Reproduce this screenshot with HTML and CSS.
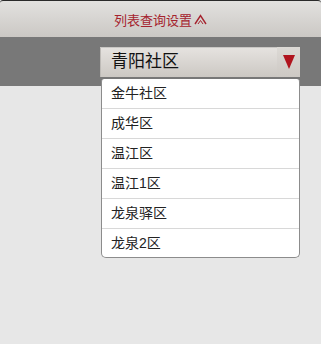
FILE: index.html
```html
<!DOCTYPE html>
<html lang="zh">
<head>
    <meta charset="UTF-8">
    <meta name="viewport" content="width=device-width, initial-scale=1.0">
    <title>列表查询设置</title>
    <link rel="stylesheet" href="styles.css">
</head>
<body>
    <div class="header">
        <span class="title">列表查询设置</span>
        <svg class="caret" width="13" height="11" viewBox="0 0 13 11">
            <path d="M1 10 L6.5 1.5 L12 10" fill="none" stroke="#a5232e" stroke-width="1.4"/>
            <path d="M4 10 L6.5 6.5 L9 10" fill="none" stroke="#a5232e" stroke-width="1"/>
        </svg>
    </div>

    <div class="toolbar">
        <div class="select">
            <span class="select-text">青阳社区</span>
            <span class="select-arrow">
                <svg width="12" height="14" viewBox="0 0 12 14">
                    <path d="M0 0 L12 0 L6 14 Z" fill="#b0141e"/>
                </svg>
            </span>
            <ul class="dropdown">
                <li>金牛社区</li>
                <li>成华区</li>
                <li>温江区</li>
                <li>温江1区</li>
                <li>龙泉驿区</li>
                <li>龙泉2区</li>
            </ul>
        </div>
    </div>
</body>
</html>
```

FILE: styles.css
```css
html, body {
    height: 100%;
}
body {
    margin: 0;
    background: #e7e7e7;
    font-family: "Liberation Sans", "Noto Sans CJK SC", sans-serif;
}
.header {
    height: 37px;
    box-sizing: border-box;
    border-top: 1px solid #2a2a2a;
    border-radius: 3px 3px 0 0;
    background: linear-gradient(#e2e1df, #cbc8c4);
    display: flex;
    align-items: center;
    justify-content: center;
    gap: 2px;
}
.title {
    color: #a5232e;
    font-size: 13px;
}
.caret {
    margin-top: 1px;
}
.toolbar {
    height: 49px;
    background: #787878;
    padding: 10px 0 0 100px;
    box-sizing: border-box;
}
.select {
    position: relative;
    width: 200px;
    height: 30px;
    display: flex;
    background: linear-gradient(#e6e3e0, #ccc8c3);
    box-shadow: inset 0 1px 0 #c9c7c4, inset 1px 0 0 #bdbab6;
}
.select-text {
    flex: 1;
    padding-left: 11px;
    font-size: 17px;
    line-height: 30px;
    color: #111;
}
.select-arrow {
    width: 23px;
    display: flex;
    align-items: center;
    justify-content: center;
    background: linear-gradient(#dcd9d5, #cdc9c4);
}
.dropdown {
    position: absolute;
    top: 32px;
    left: 1px;
    width: 197px;
    margin: 0;
    padding: 0;
    list-style: none;
    background: #fff;
    border: 1px solid #8c8c8c;
    border-top: none;
    border-radius: 3px 3px 5px 5px;
}
.dropdown li {
    height: 29px;
    line-height: 29px;
    padding-left: 9px;
    font-size: 14px;
    color: #222;
    border-bottom: 1px solid #d8d8d8;
}
.dropdown li:last-child {
    height: 28px;
    line-height: 28px;
    border-bottom: none;
}
```
